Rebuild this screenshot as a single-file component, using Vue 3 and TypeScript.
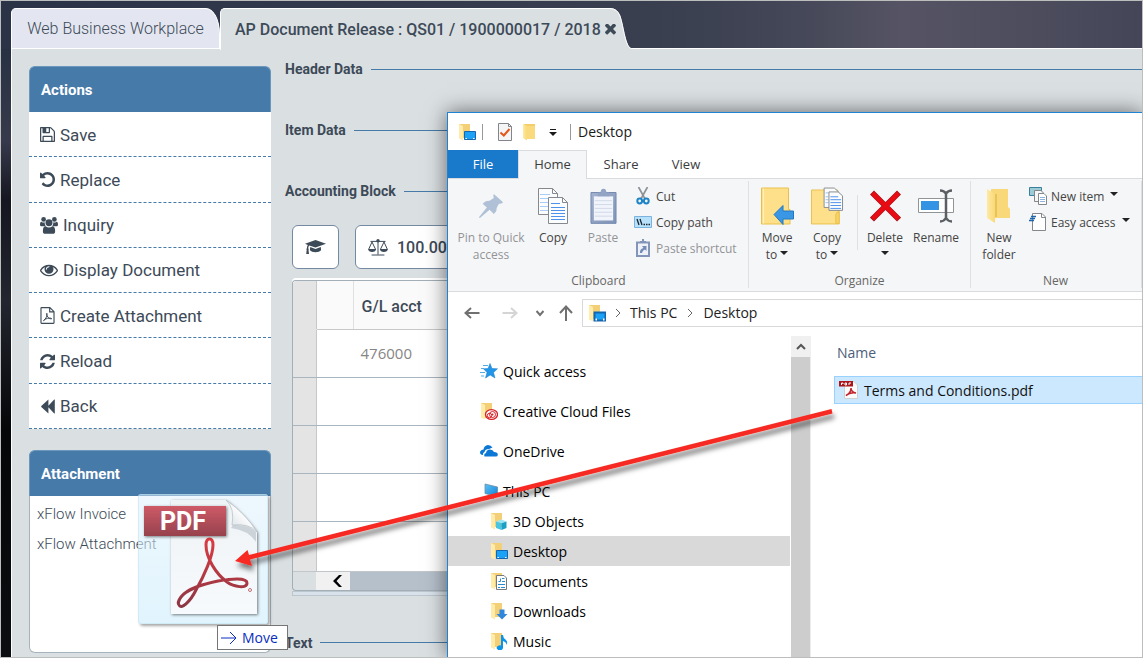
<script setup lang="ts">
interface ActionItem {
  label: string
  icon: string
  size: 'narrow' | 'wide'
}

interface NavItem {
  label: string
  icon: string
  child?: boolean
  selected?: boolean
}

const actions: ActionItem[] = [
  { label: 'Save', icon: 'floppy', size: 'narrow' },
  { label: 'Replace', icon: 'undo', size: 'narrow' },
  { label: 'Inquiry', icon: 'users', size: 'wide' },
  { label: 'Display Document', icon: 'eye', size: 'wide' },
  { label: 'Create Attachment', icon: 'file-pdf', size: 'narrow' },
  { label: 'Reload', icon: 'refresh', size: 'narrow' },
  { label: 'Back', icon: 'backward', size: 'narrow' },
]

const attachments: string[] = ['xFlow Invoice', 'xFlow Attachment']
const accounts: string[] = ['476000', '', '', '', '']

const navItems: NavItem[] = [
  { label: 'Quick access', icon: 'star' },
  { label: 'Creative Cloud Files', icon: 'folder-cloud' },
  { label: 'OneDrive', icon: 'onedrive' },
  { label: 'This PC', icon: 'pc' },
  { label: '3D Objects', icon: 'folder-cube', child: true },
  { label: 'Desktop', icon: 'folder-desktop', child: true, selected: true },
  { label: 'Documents', icon: 'folder-doc', child: true },
  { label: 'Downloads', icon: 'folder-down', child: true },
  { label: 'Music', icon: 'folder-music', child: true },
]
</script>

<template>
  <div class="frame">
    <svg class="sprite" aria-hidden="true">
      <defs>
        <linearGradient id="g-fold" x1="0" y1="0" x2="1" y2="0">
          <stop offset="0" stop-color="#ffe9a2" /><stop offset="1" stop-color="#f9d978" />
        </linearGradient>
        <linearGradient id="g-blue" x1="0" y1="0" x2="1" y2="1">
          <stop offset="0" stop-color="#5cc3f7" /><stop offset="1" stop-color="#0f7fd6" />
        </linearGradient>
        <linearGradient id="g-clip" x1="0" y1="0" x2="1" y2="1">
          <stop offset="0" stop-color="#a3b2ce" /><stop offset="1" stop-color="#7f93b8" />
        </linearGradient>
      </defs>
      <symbol id="floppy" viewBox="128 128 1536 1536"><path d="M512 1536h768v-384h-768v384zm896 0h128v-896q0-14-10-38.5t-20-34.5l-281-281q-10-10-34-20t-39-10v416q0 40-28 68t-68 28h-576q-40 0-68-28t-28-68v-416h-128v1280h128v-416q0-40 28-68t68-28h832q40 0 68 28t28 68v416zm-384-928v-320q0-13-9.5-22.5t-22.5-9.5h-192q-13 0-22.5 9.5t-9.5 22.5v320q0 13 9.5 22.5t22.5 9.5h192q13 0 22.5-9.5t9.5-22.5zm640 32v928q0 40-28 68t-68 28h-1344q-40 0-68-28t-28-68v-1344q0-40 28-68t68-28h928q40 0 88 20t76 48l280 280q28 28 48 76t20 88z" /></symbol>
      <symbol id="undo" viewBox="128 128 1536 1536"><path d="M1664 896q0 156-61 298t-164 245-245 164-298 61q-172 0-327-72.5t-264-204.5q-7-10-6.5-22.5t8.5-20.5l137-138q10-9 25-9 16 2 23 12 73 95 179 147t225 52q104 0 198.5-40.5t163.5-109.5 109.5-163.5 40.5-198.5-40.5-198.5-109.5-163.5-163.5-109.5-198.5-40.5q-98 0-188 35.5t-160 101.5l137 138q31 30 14 69-17 40-59 40h-448q-26 0-45-19t-19-45v-448q0-42 40-59 39-17 69 14l130 129q107-101 244.5-156.5t284.5-55.5q156 0 298 61t245 164 164 245 61 298z" /></symbol>
      <symbol id="users" viewBox="0 0 19 18">
        <circle cx="3.8" cy="2.6" r="2.5" /><circle cx="15.2" cy="2.6" r="2.5" />
        <path d="M5 5.6Q4.6 8 6 9.8H1.6Q0 9.8 0 8.4Q0 4.9 1.4 4.9Q3.2 6.2 5 5.6zM14 5.6Q14.4 8 13 9.8H17.4Q19 9.8 19 8.4Q19 4.9 17.6 4.9Q15.8 6.2 14 5.6z" />
        <circle cx="9.5" cy="6" r="3.7" />
        <path d="M5.9 9.7Q9.5 12.5 13.1 9.7Q16 9.7 16 15Q16 17.8 13.5 17.8H5.5Q3 17.8 3 15Q3 9.7 5.9 9.7z" />
      </symbol>
      <symbol id="eye" viewBox="0 384 1792 1152"><path d="M1664 960q-152-236-381-353 61 104 61 225 0 185-131.5 316.5t-316.5 131.5-316.5-131.5-131.5-316.5q0-121 61-225-229 117-381 353 133 205 333.5 326.5t434.5 121.5 434.5-121.5 333.5-326.5zm-720-384q0-20-14-34t-34-14q-125 0-214.5 89.5t-89.5 214.5q0 20 14 34t34 14 34-14 14-34q0-86 61-147t147-61q20 0 34-14t14-34zm848 384q0 34-20 69-140 230-376.5 368.5t-499.5 138.5-499.5-139-376.5-368q-20-35-20-69t20-69q140-229 376.5-368t499.5-139 499.5 139 376.5 368q20 35 20 69z" /></symbol>
      <symbol id="file-pdf" viewBox="0 0 15 18">
        <path d="M.6 1.2Q.6 .6 1.2 .6H10L14.4 5V16.8Q14.4 17.4 13.8 17.4H1.2Q.6 17.4 .6 16.8zM9.8 .8V5.2H14.2" fill="none" stroke="currentColor" stroke-width="1.2" />
        <path d="M3.2 14.5Q5 13.5 6.4 10.6Q7.5 8 6.9 6.6Q6.1 6.6 6.7 8.6Q7.7 11.4 9.8 12.3Q12 12.9 12 12.3Q11 11.3 7.5 12Q4.5 12.8 3.2 14.5z" fill="none" stroke="currentColor" />
      </symbol>
      <symbol id="refresh" viewBox="128 128 1536 1536"><path d="M1639 1056q0 5-1 7-64 268-268 434.5t-478 166.5q-146 0-282.5-55t-243.5-157l-129 129q-19 19-45 19t-45-19-19-45v-448q0-26 19-45t45-19h448q26 0 45 19t19 45-19 45l-137 137q71 66 161 102t187 36q134 0 250-65t186-179q11-17 53-117 8-23 30-23h192q13 0 22.5 9.5t9.5 22.5zm25-800v448q0 26-19 45t-45 19h-448q-26 0-45-19t-19-45 19-45l138-138q-148-137-349-137-134 0-250 65t-186 179q-11 17-53 117-8 23-30 23h-199q-13 0-22.5-9.5t-9.5-22.5v-7q65-268 270-434.5t480-166.5q146 0 284 55.5t245 156.5l130-129q19-19 45-19t45 19 19 45z" /></symbol>
      <symbol id="backward" viewBox="0 0 15 15"><path d="M8.4 .4V6.8L14.2 .5Q14.8 .2 14.8 .8V14.2Q14.8 14.8 14.2 14.5L8.4 8.2V14.6L1.3 7.9Q1 7.5 1.3 7.1z" /></symbol>
      <symbol id="times" viewBox="302 430 1188 1188"><path d="M1490 1322q0 40-28 68l-136 136q-28 28-68 28t-68-28l-294-294-294 294q-28 28-68 28t-68-28l-136-136q-28-28-28-68t28-68l294-294-294-294q-28-28-28-68t28-68l136-136q28-28 68-28t68 28l294 294 294-294q28-28 68-28t68 28l136 136q28 28 28 68t-28 68l-294 294 294 294q28 28 28 68z" /></symbol>
      <symbol id="cap" viewBox="0 0 21 15">
        <path d="M10.5 0L21 3.8L10.5 7.6L4.2 5.4Q3.3 6.3 3.2 8.2Q4.2 9 3.5 10L4 14H1.2L1.7 10Q1 9 1.9 8.2Q1.9 6 2.8 4.9L0 3.8z" />
        <path d="M5.2 7L10.5 8.9L15.8 7L16.1 10.2Q14.5 12.3 10.5 12.3Q6.5 12.3 4.9 10.2z" />
      </symbol>
      <symbol id="scale" viewBox="0 0 20 17">
        <path d="M2.5 2.4H17.5M10 2V15.6M3.6 16H16.4M4 3L.8 10M4 3L7.4 10M16 3L12.6 10M16 3L19.2 10" fill="none" stroke="currentColor" />
        <path d="M0 10H8.2Q7.6 13 4.1 13Q.6 13 0 10zM11.8 10H20Q19.4 13 15.9 13Q12.4 13 11.8 10z" /><circle cx="10" cy="1.8" r="1.7" />
      </symbol>

      <symbol id="folder" viewBox="0 0 18 18">
        <path d="M3 1H14V15H3z" fill="#f3cf6b" /><path d="M2 1L6 3V17.5L2 15z" fill="url(#g-fold)" /><path d="M6 3H14V16H6z" fill="#f9da7c" />
      </symbol>
      <symbol id="folder-desktop" viewBox="0 0 18 18">
        <path d="M1 1H12V15H1z" fill="#f3d078" /><path d="M1 1L5 3V17.5L1 15.5z" fill="#ffebaa" />
        <path d="M6.5 8.5H17.5V16.5H6.5z" fill="#1ba1f5" stroke="#1467ae" /><path d="M7.5 15.5H9M15 15.5H16.5" stroke="#fff" />
      </symbol>
      <symbol id="folder-cloud" viewBox="0 0 18 18">
        <path d="M1 1H12V16H1z" fill="#f3d078" /><path d="M1 1L5 3V17L1 16z" fill="#ffebaa" />
        <ellipse cx="11.5" cy="12.5" rx="6" ry="4.8" fill="#fff" stroke="#d81f26" stroke-width="1.3" />
        <circle cx="9.5" cy="13.5" r="2.2" fill="none" stroke="#d81f26" /><circle cx="12.5" cy="12.5" r="3" fill="none" stroke="#d81f26" /><circle cx="12.5" cy="12.5" r="1" fill="#d81f26" />
      </symbol>
      <symbol id="folder-cube" viewBox="0 0 18 18">
        <path d="M1 1H12V15H1z" fill="#f3d078" /><path d="M1 1L5 3V17.5L1 15.5z" fill="#ffebaa" />
        <path d="M6 9.5L11.5 7.5L16.5 9.5L11.5 11.3z" fill="#9be6f5" /><path d="M6 9.5L11.5 11.3V18L6 16z" fill="#48c5e2" /><path d="M16.5 9.5L11.5 11.3V18L16.5 16z" fill="#1b9fc4" />
      </symbol>
      <symbol id="folder-doc" viewBox="0 0 18 18">
        <path d="M1 1H12V15H1z" fill="#f3d078" /><path d="M1 1L5 3V17.5L1 15.5z" fill="#ffebaa" />
        <path d="M6.5 3.5H14L16.5 6V17.5H6.5z" fill="#fff" stroke="#77797c" /><path d="M12 6.5H14.5M12 9.5H15M8 12.5H15M8 15.5H10M11 15.5H15M8.5 9.5H10.5V6.5" stroke="#278bd0" fill="none" />
      </symbol>
      <symbol id="folder-down" viewBox="0 0 18 18">
        <path d="M1 1H12V15H1z" fill="#f3d078" /><path d="M1 1L5 3V17.5L1 15.5z" fill="#ffebaa" />
        <path d="M9.5 7.5H14.5V12H17.5L12 17.5L6.5 12H9.5z" fill="#2f86da" />
      </symbol>
      <symbol id="folder-music" viewBox="0 0 18 18">
        <path d="M1 1H12V15H1z" fill="#f3d078" /><path d="M1 1L5 3V17.5L1 15.5z" fill="#ffebaa" />
        <path d="M11 3H13Q13 6 16 8Q18 10 16.500 13Q16.500 10 13 9V15.500A3.200 2.500 0 1 1 11 13.500z" fill="#0b93ea" />
      </symbol>
      <symbol id="star" viewBox="0 0 18 18">
        <path d="M10 1.5L12 6.5L17.5 6.8L13.5 10.5L15 16L10.2 13L5.5 16L7 10.5L3.5 6.8L8 6.5z" fill="#2196e8" stroke="#1677c8" stroke-width=".5" />
        <path d="M3 3.5H8M1 6.5H4M0 10.5H5M1 14H4" stroke="#51adea" />
      </symbol>
      <symbol id="onedrive" viewBox="0 0 18 18">
        <path d="M2 13Q-1 12 .5 9Q1.5 7.5 3.5 7.5Q4 3.5 8 3Q11 3 12.5 5.5L9 7Q5 7 4.5 10Q2.5 11 3 13zM4.5 14.5Q3.5 11.5 6 11Q6.5 7.5 10 7.5Q13 7.5 14 10Q18 10 17.8 13Q17.5 14.5 16 14.5z" fill="#0a78d4" />
      </symbol>
      <symbol id="pc" viewBox="0 0 18 18"><path d="M5 2L17.5 5V14.5L5 11.5z" fill="url(#g-blue)" stroke="#6c8ba5" stroke-width=".8" /><path d="M7 14L14 15.5V17L7 15.5z" fill="#8da0ad" /></symbol>
      <symbol id="check-doc" viewBox="0 0 16 18"><path d="M1.5 .5H11.5L14.5 3.5V17.5H1.5z" fill="#f5f5f5" stroke="#82868a" /><path d="M11.5 .5V3.5H14.5" fill="none" stroke="#82868a" /><path d="M3.5 9.5L6.8 12.5L12.5 6" fill="none" stroke="#e4571b" stroke-width="2" /></symbol>
      <symbol id="pin" viewBox="0 0 28 28"><path d="M17 1L27 10Q26 12 22.5 11.5L20 16.5Q20.5 20 17 22.5L12.5 18L2 27L1 26L9.500 15.5L5 11.5Q8 8 12 8.5L17 5.500Q16 3 17 1z" fill="#b0c0d6" /></symbol>
      <symbol id="copy" viewBox="0 0 30 36">
        <path d="M.5 .5H14.5L19.5 5.5V26.5H.5z" fill="#fbfcfd" stroke="#85888c" /><path d="M2 6.5H12M2 10.5H18M2 14.5H18M2 18.5H18M2 22.5H18" stroke="#a9cdf8" />
        <path d="M10.5 9.5H24.5L29.5 14.5V35.5H10.5z" fill="#fbfcfd" stroke="#85888c" /><path d="M24.5 9.5V14.5H29.5M14.5 .5V5.5H19.5" fill="none" stroke="#85888c" /><path d="M13 15.500H22M13 19.500H27M13 22.500H27M13 25.500H27M13 28.500H27M13 31.500H27" stroke="#4e91ea" />
      </symbol>
      <symbol id="paste" viewBox="0 0 28 38"><path d="M1 5H27V37H1z" fill="url(#g-clip)" stroke="#7488ae" /><path d="M4 9H24V34H4z" fill="#f1f4fa" /><path d="M8 9V5H11Q11 1 14 1Q17 1 17 5H20V9z" fill="#93a4c4" /><path d="M5 13.5H23M5 17.5H23M5 21.5H23M5 25.5H23M5 29.5H23" stroke="#d0d8e6" /></symbol>
      <symbol id="cut" viewBox="0 0 14 18"><path d="M2.5 0L8 10L9.5 12M11.5 0L6 10L4.5 12" fill="none" stroke="#8d9298" stroke-width="1.7" /><circle cx="3.7" cy="14" r="2.4" fill="none" stroke="#1d84c8" stroke-width="2" /><circle cx="10.3" cy="14" r="2.4" fill="none" stroke="#1d84c8" stroke-width="2" /></symbol>
      <symbol id="copy-path" viewBox="0 0 18 12"><path d="M.5 .5H17.5V11.5H.5z" fill="#b7e1fb" stroke="#79b3de" /><path d="M3 3L5 9M6 3L8 9M9.5 8.500H11M12 8.500H13.500M14.500 8.500H16" stroke="#18252f" stroke-width="1.3" /></symbol>
      <symbol id="paste-short" viewBox="0 0 14 18"><path d="M1 3.5H13V17H1z" fill="#eef2f8" stroke="#8396ba" stroke-width="2" /><path d="M4 4V2H6V0H8V2H10V4z" fill="#8295b9" /><path d="M4 14Q3.5 10 7.5 9L6 7H10.5V12L9 10.5Q6.5 11 6 14z" fill="#738bb8" /></symbol>
      <symbol id="move-to" viewBox="0 0 33 37"><path d="M.5 .5H27.5V22H29V36.5H.5z" fill="#ffe08a" stroke="#e9c14a" /><path d="M2.5 1V36" stroke="#fff0bd" /><path d="M13 27L22 18V23.5H32.5V31.5H22V37z" fill="#3a97e6" stroke="#2478c2" /></symbol>
      <symbol id="copy-to" viewBox="0 0 34 38">
        <path d="M.5 2.5H27.5V24H29V37.5H.5z" fill="#ffe08a" stroke="#e9c14a" /><path d="M25.5 37V28Q25.5 25 29 25V37z" fill="#f9d166" stroke="#e9c14a" /><path d="M13.5 .5H24L28.5 4.5V20.5H13.5z" fill="#fbfcfd" stroke="#898c90" /><path d="M15 5.5H18M15 9.5H18M15 12.5H18M15 15.5H18" stroke="#9ac3f4" />
        <path d="M18.5 4.5H28L32.5 8.5V23.5H18.5z" fill="#fbfcfd" stroke="#85888c" /><path d="M20 9.5H28M20 12.5H31M20 15.5H31M20 18.5H31M20 21.5H31" stroke="#4e91ea" />
      </symbol>
      <symbol id="delete" viewBox="0 0 32 32"><path d="M2 2L30 30M30 2L2 30" stroke="#a8151b" stroke-width="6" /><path d="M2.7 2.7L29.3 29.3M29.3 2.7L2.7 29.3" stroke="#e80b14" stroke-width="4.5" /></symbol>
      <symbol id="rename" viewBox="0 0 36 34"><path d="M.5 9.5H35.5V23.500H.5z" fill="#fff" stroke="#909398" /><path d="M3 12H21V21H3z" fill="#3593e4" /><path d="M22 1.5Q26 1.5 28 4.5Q30 1.5 34 1.5M28 4V29M22 32.5Q26 32.5 28 29Q30 32.5 34 32.5" fill="none" stroke="#5b5e63" stroke-width="2.5" /></symbol>
      <symbol id="new-folder" viewBox="0 0 26 36"><path d="M5 1H22V19L24 21V30H5z" fill="#f8d878" /><path d="M1 1L9 6V35L1 30z" fill="url(#g-fold)" /><path d="M9 6H11V29H9z" fill="#e9c25a" /></symbol>
      <symbol id="new-item" viewBox="0 0 18 18"><path d="M.5 .5H12.5V8.5H.5z" fill="#9ccbd6" stroke="#397f9b" /><path d="M5.5 3.5H12L14.5 6V14.5H5.5z" fill="#f6f6f6" stroke="#83878a" /><path d="M9.5 6.5H15L17.5 9V17.5H9.5z" fill="#fff" stroke="#83878a" /><path d="M11 10.5H16M11 12.5H16M11 14.5H16" stroke="#8eb3df" /></symbol>
      <symbol id="easy" viewBox="0 0 18 18"><path d="M3.500 .5H13L16.5 4V17.5H3.500z" fill="#fff" stroke="#84878b" /><path d="M12.5 .5V4.5H16.5" fill="none" stroke="#84878b" /><path d="M2 3.5H7M1 5.5H6M0 7.5H5" stroke="#1c66ad" stroke-width="1.3" /></symbol>
      <symbol id="pdf-small" viewBox="0 0 20 18"><path d="M5.5 .5H15L18.5 4V17.5H5.5z" fill="#fbfbfb" stroke="#ced1d4" /><path d="M0 0H14V5.5H0z" fill="#a9161c" /><path d="M2.5 4V2H4V3M6 2V4H7.5V2zM10 4V2H12" fill="none" stroke="#fff" /><path d="M7 14.5Q12 12 12 7Q12 11 17 12Q11 11 7 14.5z" fill="none" stroke="#c0262d" stroke-width="1.5" /></symbol>
    </svg>

    <nav class="tabs">
      <button class="tab idle" type="button">Web Business Workplace</button>
      <div class="tab current">
        <span>AP Document Release : QS01 / 1900000017 / 2018</span>
        <button class="close" type="button" aria-label="Close"><svg viewBox="0 0 11 11"><use href="#times" /></svg></button>
      </div>
      <svg class="tail" viewBox="0 0 22 41"><path d="M0 0Q7 0 10 7C14 18 15 38 22 41H0z" fill="#dadfe2" /><path d="M0 .5Q7 .5 10 8C14 20 15 38 21 40.5" fill="none" stroke="#fff" /></svg>
    </nav>

    <main class="workplace">
      <aside class="side">
        <section class="panel">
          <h2>Actions</h2>
          <ul class="actions">
            <li v-for="a in actions" :key="a.label">
              <button type="button"><svg :class="a.size"><use :href="'#' + a.icon" /></svg>{{ a.label }}</button>
            </li>
          </ul>
        </section>
        <section class="panel drop">
          <h2>Attachment</h2>
          <ul class="files">
            <li v-for="f in attachments" :key="f"><a href="#">{{ f }}</a></li>
          </ul>
        </section>
      </aside>

      <div class="detail">
        <h3>Header Data</h3>
        <h3>Item Data</h3>
        <h3>Accounting Block</h3>
        <div class="tools">
          <button type="button" class="tool cap" aria-label="Template"><svg><use href="#cap" /></svg></button>
          <button type="button" class="tool sum"><svg><use href="#scale" /></svg>100.00</button>
        </div>
        <div class="grid">
          <table>
            <thead>
              <tr><td class="row-head"></td><th class="mark"></th><th class="acct" scope="col">G/L acct</th></tr>
            </thead>
            <tbody>
              <tr v-for="(a, i) in accounts" :key="i"><td class="row-head"></td><td colspan="2" class="value">{{ a }}</td></tr>
            </tbody>
          </table>
          <div class="hscroll">
            <button type="button" aria-label="Scroll left"><svg viewBox="0 0 10 12"><path d="M9 0H6L0 6L6 12H9L3.5 6z" /></svg></button>
            <span></span>
          </div>
        </div>
        <div class="strip"></div>
        <h3 class="last">Text</h3>
      </div>
    </main>

    <section class="explorer">
      <header class="titlebar">
        <svg class="i18"><use href="#folder-desktop" /></svg>
        <i class="bar"></i>
        <svg class="i18 check"><use href="#check-doc" /></svg>
        <svg class="i18 fold"><use href="#folder" /></svg>
        <svg class="more" viewBox="0 0 8 8"><path d="M1 0H7V1H1zM0 3H8L4 7z" /></svg>
        <i class="bar"></i>
        <span>Desktop</span>
      </header>
      <nav class="ribbon-tabs">
        <button type="button" class="file">File</button>
        <button type="button" class="home">Home</button>
        <button type="button" class="share">Share</button>
        <button type="button" class="view">View</button>
      </nav>
      <div class="ribbon">
        <div class="group clipboard">
          <div class="cmds">
            <button type="button" class="big pin off" disabled><svg><use href="#pin" /></svg><span>Pin to Quick<br />access</span></button>
            <button type="button" class="big copy"><svg><use href="#copy" /></svg><span>Copy</span></button>
            <button type="button" class="big paste off" disabled><svg><use href="#paste" /></svg><span>Paste</span></button>
            <div class="small">
              <button type="button"><svg><use href="#cut" /></svg>Cut</button>
              <button type="button"><svg><use href="#copy-path" /></svg>Copy path</button>
              <button type="button" class="off" disabled><svg><use href="#paste-short" /></svg>Paste shortcut</button>
            </div>
          </div>
          <p>Clipboard</p>
        </div>
        <div class="group organize">
          <div class="cmds">
            <button type="button" class="big to"><svg><use href="#move-to" /></svg><span>Move<br />to <i class="caret"></i></span></button>
            <button type="button" class="big to"><svg><use href="#copy-to" /></svg><span>Copy<br />to <i class="caret"></i></span></button>
            <i class="divider"></i>
            <button type="button" class="big del"><svg><use href="#delete" /></svg><span>Delete<br /><i class="caret"></i></span></button>
            <button type="button" class="big ren"><svg><use href="#rename" /></svg><span>Rename</span></button>
          </div>
          <p>Organize</p>
        </div>
        <div class="group new">
          <div class="cmds">
            <button type="button" class="big folder"><svg><use href="#new-folder" /></svg><span>New<br />folder</span></button>
            <div class="small">
              <button type="button"><svg><use href="#new-item" /></svg>New item<i class="caret"></i></button>
              <button type="button"><svg><use href="#easy" /></svg>Easy access<i class="caret"></i></button>
            </div>
          </div>
          <p>New</p>
        </div>
      </div>
      <div class="address">
        <button type="button" aria-label="Back"><svg class="a16" viewBox="0 0 16 16"><path d="M15.5 8H1.5M7 3L1.5 8L7 13" /></svg></button>
        <button type="button" class="fwd" aria-label="Forward" disabled><svg class="a16" viewBox="0 0 16 16"><path d="M.5 8H14.5M9 3L14.5 8L9 13" /></svg></button>
        <button type="button" class="recent" aria-label="Recent"><svg viewBox="0 0 8 8"><path d="M.5 2L4 6L7.5 2" /></svg></button>
        <button type="button" aria-label="Up"><svg class="a16" viewBox="0 0 16 16"><path d="M8 16V1.5M2 8L8 1.5L14 8" /></svg></button>
        <div class="crumbs">
          <svg class="i18"><use href="#folder-desktop" /></svg>
          <svg class="chev" viewBox="0 0 6 8"><path d="M1 0L5 4L1 8" /></svg>
          <a href="#">This PC</a>
          <svg class="chev" viewBox="0 0 6 8"><path d="M1 0L5 4L1 8" /></svg>
          <a href="#">Desktop</a>
        </div>
      </div>
      <div class="panes">
        <ul class="tree">
          <li v-for="n in navItems" :key="n.label" :class="{ child: n.child, selected: n.selected }">
            <a href="#"><svg class="i18"><use :href="'#' + n.icon" /></svg>{{ n.label }}</a>
          </li>
        </ul>
        <div class="vscroll">
          <button type="button" aria-label="Scroll up"><svg viewBox="0 0 10 7"><path d="M1 6L5 2L9 6" /></svg></button>
        </div>
        <div class="list">
          <div class="column">Name</div>
          <a href="#" class="entry"><svg><use href="#pdf-small" /></svg>Terms and Conditions.pdf</a>
        </div>
      </div>
    </section>

    <div class="ghost">
      <svg viewBox="0 0 130 130">
        <defs>
          <linearGradient id="g-paper" x1="0" y1="0" x2="0" y2="1"><stop offset="0" stop-color="#eef3f6" /><stop offset="1" stop-color="#f7fafc" /></linearGradient>
          <linearGradient id="g-red" x1="0" y1="0" x2="0" y2="1"><stop offset="0" stop-color="#ce5a67" /><stop offset="1" stop-color="#96424d" /></linearGradient>
          <linearGradient id="g-loop" x1="0" y1="0" x2="0" y2="1"><stop offset="0" stop-color="#dc3b43" /><stop offset="1" stop-color="#8c3744" /></linearGradient>
          <linearGradient id="g-curl" x1="0" y1="1" x2="1" y2="0"><stop offset="0" stop-color="#d3dadf" /><stop offset=".6" stop-color="#fff" /></linearGradient>
          <filter id="f-soft" x="-20%" y="-20%" width="150%" height="150%"><feDropShadow dx="1" dy="1" stdDeviation="1.5" flood-opacity=".5" /></filter>
        </defs>
        <path d="M33 6H88Q104 18 119 38V120H33z" fill="url(#g-paper)" filter="url(#f-soft)" />
        <path d="M95 31Q111 30 118 38V48Q110 36 93 34z" fill="#ccd4d9" />
        <path d="M88 6Q97 14 94 31Q111 29 119 38Q108 20 88 6z" fill="url(#g-curl)" stroke="#b3bbc0" stroke-width=".7" />
        <path d="M41 111C43 116 52 108 58 96C66 82 75 62 75 51C75 43 68 43 68 51C68 64 78 80 89 88C96 93 109 95 109 89C109 83 92 85 80 87C66 90 50 94 43 103C40 107 40 110 41 111z" fill="none" stroke="url(#g-loop)" stroke-width="3" />
        <circle cx="112" cy="96" r="1.5" fill="none" stroke="#c0707a" />
        <path d="M6 12H88V42H6z" fill="url(#g-red)" filter="url(#f-soft)" />
        <text x="45" y="36" text-anchor="middle" class="pdf">PDF</text>
      </svg>
    </div>
    <svg class="drag" viewBox="0 0 620 180">
      <defs><filter id="f-drag" x="-5%" y="-10%" width="110%" height="130%"><feDropShadow dx="2" dy="5" stdDeviation="2.5" flood-opacity=".5" /></filter></defs>
      <path d="M610.5 10L611.5 14.5L29 160.5L31 167L14 162L26.5 151L28 156z" fill="#f62a22" filter="url(#f-drag)" />
    </svg>
    <div class="tip"><svg viewBox="0 0 16 14"><path d="M0 7H15M9 1L15 7L9 13" /></svg>Move</div>
  </div>
</template>

<style>
body { margin: 0; }
</style>

<style scoped>
* { box-sizing: border-box; }
.frame {
  position: relative;
  display: flex;
  flex-direction: column;
  min-height: 100vh;
  padding: 7px 0 0 10px;
  overflow: hidden;
  border: 1px solid #bcbebd;
  background:
    linear-gradient(90deg, #2b3347 0, #3a3f50 650px, #54546a00 900px) top / 100% 48px no-repeat,
    linear-gradient(90deg, #3c4252 600px, #565464 900px, #444657 100%) top / 100% 48px no-repeat,
    linear-gradient(180deg, #202d40 0, #373a4b 140px, #15161f 200px, #23262f 300px, #050608 430px, #0c0d10 100%);
  font-family: Roboto, "Liberation Sans", sans-serif;
  color: #3d4a58;
}
.sprite { position: absolute; width: 0; height: 0; }
svg { display: block; flex: none; fill: currentColor; }
button { margin: 0; padding: 0; border: 0; background: none; font: inherit; color: inherit; }
a { color: inherit; text-decoration: none; }
ul { margin: 0; padding: 0; list-style: none; }
h2, h3, p { margin: 0; }

.tabs { display: flex; height: 41px; }
.tab { font-size: 16px; white-space: nowrap; }
.idle {
  width: 209px;
  border: 1px solid #fff;
  border-radius: 5px 14px 0 0 / 5px 26px 0 0;
  background: #e3e6f0;
  font-weight: 300;
}
.current {
  z-index: 2;
  display: flex;
  align-items: center;
  width: 390px;
  height: 42px;
  padding: 0 0 1px 14px;
  border: solid #fff;
  border-width: 1px 0 0 1px;
  border-radius: 5px 0 0 0;
  background: #dadfe2;
  font-weight: 500;
}
.close { width: 11px; height: 11px; margin-left: 4px; }
.close svg { width: 11px; height: 11px; }
.tail { z-index: 1; width: 22px; height: 41px; }

.workplace {
  display: flex;
  flex: 1;
  gap: 14px;
  margin-top: -1px;
  padding: 17px 0 4px 17px;
  border: solid #fff;
  border-width: 1px 0 0 1px;
  background: #dadfe2;
}
.side { width: 242px; flex: none; }
.panel h2 {
  height: 46px;
  padding-left: 11px;
  border: 1px solid #6b97bd;
  border-bottom: 0;
  border-radius: 6px 6px 0 0;
  background: #467aa9;
  color: #fff;
  font-size: 15px;
  line-height: 46px;
}
.actions { display: grid; grid-auto-rows: 1fr; height: 317px; background: #fff; }
.actions li { border-bottom: 1px dashed #467aa9; }
.actions button { display: flex; align-items: center; gap: 5px; width: 100%; height: 100%; padding: 1px 0 0 11px; font-size: 17px; }
.actions svg { width: 15px; height: 17px; }
.actions .wide { width: 18px; }
.drop { height: 203px; margin-top: 21px; border: 1px solid #a6b3bc; border-top: 0; border-radius: 6px; background: #fff; }
.drop h2 { margin: 0 -1px; }
.files { padding: 3px 7px; font-size: 15px; line-height: 30px; font-weight: 300; }

.detail { flex: 1; min-width: 0; }
h3 { display: flex; align-items: center; gap: 8px; height: 20px; margin: 0 0 41px; font-size: 14px; line-height: 20px; white-space: nowrap; }
h3:first-child { margin-top: -7px; }
h3:nth-child(3) { margin-bottom: 24px; }
h3::after { content: ""; flex: 1; height: 1px; background: #467aa9; }
.tools { display: flex; gap: 16px; padding-left: 7px; }
.tool { display: flex; align-items: center; height: 44px; border: 1px solid #7489a2; border-radius: 6px; background: #fff; }
.cap { width: 47px; justify-content: center; }
.cap svg { width: 21px; height: 15px; }
.sum { gap: 9px; padding: 0 14px 0 12px; font-size: 16px; font-weight: 500; }
.sum svg { width: 20px; height: 17px; }
.grid { margin: 11px 0 0 7px; border: 1px solid #a3afb8; border-right: 0; border-radius: 4px 0 0 4px; box-shadow: 0 -2px 0 #fff; overflow: hidden; }
table { width: 100%; border-collapse: collapse; table-layout: fixed; background: #fff; }
td, th { height: 48px; padding: 0; border-bottom: 1px solid #a9b5bf; text-align: left; }
th { border-bottom-color: #c8c8c8; background: #fafafa; }
.row-head { width: 23px; border-right: 1px solid #c4c8cb; background: #e4e4e4; }
.mark { width: 37px; border-right: 1px solid #e0e0e0; }
.acct { padding: 3px 0 0 8px; font-size: 16px; font-weight: 500; }
.value { padding-left: 44px; color: #858585; font: 15px "Open Sans", sans-serif; }
thead .row-head { border-bottom-color: #e4e4e4; }
tbody tr:last-child td { height: 50px; border-bottom-color: #c0c6ca; }
.hscroll { display: flex; height: 18px; padding-left: 23px; }
.hscroll button { display: grid; place-items: center; width: 34px; padding-left: 10px; background: #f1f1f1; color: #000; }
.hscroll button svg { width: 10px; height: 12px; }
.hscroll span { flex: 1; background: #b6c0cb; }
.strip { height: 5px; margin: 0 0 37px 7px; border: 1px solid #bcc6cd; border-right: 0; background: #d9e2ea; }
h3.last { margin: 0; }

.explorer {
  position: absolute;
  inset: 111px 0 0 446px;
  z-index: 2;
  display: flex;
  flex-direction: column;
  border: solid #1f83d3;
  border-width: 1px 0 0 1px;
  background: #fff;
  box-shadow: 0 0 20px rgba(0, 0, 0, .55);
  font: 14px "Open Sans", "Noto Sans", sans-serif;
  color: #1a1a1a;
}
.i18 { width: 18px; height: 18px; }
.titlebar { display: flex; align-items: center; height: 37px; padding-left: 10px; }
.bar { width: 1px; height: 16px; background: #999; }
.titlebar .bar { margin: 0 7px 0 6px; }
.check { margin-left: 6px; }
.fold { margin-left: 7px; }
.more { width: 8px; height: 8px; margin: 2px 7px 0 10px; }
.ribbon-tabs { display: flex; height: 29px; border-bottom: 1px solid #dadbdc; color: #3c3c3c; font-size: 13px; }
.ribbon-tabs button { height: 28px; }
.ribbon-tabs .file { width: 70px; background: #1979ca; color: #fff; }
.ribbon-tabs .home { width: 69px; height: 29px; padding-bottom: 2px; border: 1px solid #dadbdc; border-bottom: 0; background: #f5f6f7; }
.share { width: 68px; }
.view { width: 62px; }
.ribbon { display: flex; height: 113px; padding-top: 2px; border-bottom: 1px solid #dadbdc; background: #f5f6f7; color: #444; font-size: 12px; }
.group { display: flex; flex-direction: column; height: 107px; border-right: 1px solid #dfe0e2; }
.clipboard { width: 301px; padding-left: 4px; }
.organize { width: 222px; padding-left: 3px; }
.new { width: 171px; padding-left: 2px; }
.group p { padding: 4px 3px 0 0; text-align: center; line-height: 14px; color: #666; }
.cmds { display: flex; height: 89px; }
.big { display: flex; flex-direction: column; align-items: center; justify-content: flex-start; height: 86px; line-height: 17px; white-space: nowrap; text-align: center; }
.big svg { height: 38px; margin: 6px 0 4px; }
.pin { width: 78px; }
.copy { width: 46px; }
.paste { width: 54px; }
.to { width: 50px; }
.del { width: 48px; }
.ren { width: 54px; }
.folder { width: 52px; }
.pin svg { width: 26px; }
.copy svg { width: 30px; }
.paste svg { width: 27px; }
.to svg { width: 33px; }
.del svg { width: 31px; }
.ren svg { width: 36px; }
.folder svg { width: 26px; }
.off { color: #929497; }
.divider { width: 1px; height: 55px; margin: 14px 3px 0 5px; background: #dfe0e2; }
.small { padding: 2px 0 0 4px; }
.small button { display: flex; align-items: center; gap: 4px; height: 26px; white-space: nowrap; }
.small svg { width: 18px; height: 18px; }
.caret { display: inline-block; border: solid transparent; border-width: 4px 4px 0; border-top-color: #222; vertical-align: 4px; }
.small .caret { margin: -4px 0 0 2px; }
.address { display: flex; align-items: center; height: 28px; margin-top: 7px; padding-left: 16px; color: #707070; }
.address svg, .vscroll svg { fill: none; stroke: currentColor; stroke-width: 2; }
.address .i18 { stroke: none; }
.a16 { width: 16px; height: 16px; }
.address .fwd { margin-left: 22px; color: #d5d5d5; }
.recent { margin: 0 14px 0 18px; }
.recent svg { width: 8px; height: 8px; }
.crumbs { display: flex; flex: 1; align-items: center; height: 28px; margin-left: 8px; padding: 0 0 1px 5px; border: 1px solid #d9d9d9; border-right: 0; color: #222; }
.crumbs .chev { width: 6px; height: 8px; margin: 0 9px; color: #666; stroke-width: 1; }
.crumbs a + .chev { margin: 0 10px; }
.panes { display: flex; flex: 1; min-height: 0; margin-top: 9px; overflow: hidden; }
.tree { width: 343px; padding-top: 20px; color: #000; }
.tree li { height: 30px; margin-bottom: 10px; }
.tree li:nth-child(n + 4) { margin-bottom: 0; }
.tree a { display: flex; align-items: center; gap: 5px; height: 30px; padding-left: 32px; }
.tree .child a { padding-left: 42px; }
.tree .child.selected { margin-right: 1px; background: #d9d9d9; }
.vscroll { width: 20px; border-right: 1px solid #ececec; background: #cdcdcd; }
.vscroll button { display: grid; place-items: center; width: 20px; height: 21px; background: #f0f0f0; color: #555; }
.vscroll svg { width: 10px; height: 7px; }
.list { flex: 1; min-width: 0; padding-left: 23px; }
.column { height: 34px; margin-bottom: 6px; padding-left: 3px; line-height: 34px; color: #4c607a; }
.entry { display: flex; align-items: center; gap: 5px; height: 28px; padding-left: 4px; border: 1px solid #99d1ff; border-right: 0; background: #cce8ff; color: #111; }
.entry svg { width: 20px; height: 18px; }

.ghost {
  position: absolute;
  left: 137px;
  top: 493px;
  z-index: 3;
  width: 130px;
  height: 130px;
  border-radius: 3px;
  background: linear-gradient(180deg, rgba(220, 240, 252, .5), rgba(205, 237, 252, .6));
  box-shadow: 2px 2px 3px rgba(0, 0, 0, .35), inset 0 0 0 1px rgba(190, 225, 240, .5);
}
.pdf { fill: #fff; font: bold 25px "Liberation Sans Narrow", Roboto, sans-serif; }
.drag { position: absolute; left: 220px; top: 398px; z-index: 4; width: 620px; height: 180px; }
.tip {
  position: absolute;
  left: 216px;
  top: 624px;
  z-index: 5;
  display: flex;
  align-items: center;
  gap: 5px;
  width: 71px;
  height: 25px;
  padding-left: 3px;
  border: 1px solid #767676;
  background: #fff;
  color: #0a2dc0;
  font: 14px "Open Sans", sans-serif;
}
.tip svg { width: 16px; height: 14px; fill: none; stroke: currentColor; stroke-width: 1; }
</style>
